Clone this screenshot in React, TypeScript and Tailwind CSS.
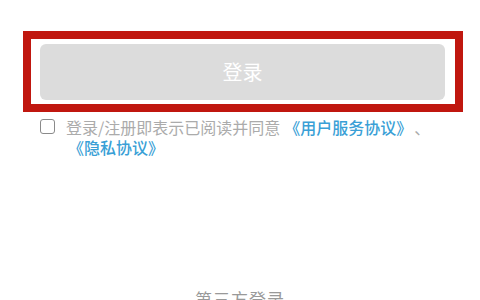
export default function App() {
  return (
    <div
      className="w-[480px] h-[300px] overflow-hidden bg-white pt-[31px]"
      style={{ fontFamily: '"Noto Sans CJK SC", "Noto Sans", sans-serif' }}
    >
      <div className="ml-[23px] w-[440px] border-8 border-[#c0170f] pl-[9px] pr-[10px] pt-[5px] pb-[4px]">
        <button className="flex h-[56px] w-full items-center justify-center rounded-md bg-[#dcdcdc] text-[20px] text-white">
          登录
        </button>
      </div>

      <div className="mt-[5px] flex items-start pl-[40px]">
        <span className="mt-[2px] h-[15px] w-[15px] shrink-0 rounded-[3px] border border-[#8a8a8a] bg-white" />
        <p className="ml-[11px] w-[375px] text-[16px] leading-[20px] text-[#ababab]">
          登录/注册即表示已阅读并同意<span className="ml-[4px] font-medium text-[#3a9fd6]">《用户服务协议》</span>
          <span className="ml-[10px]">、</span>
          <span className="ml-[2px] font-medium text-[#3a9fd6]">《隐私协议》</span>
        </p>
      </div>

      <div className="mt-[132px] flex items-center px-[43px]">
        <div className="mt-[10px] h-px flex-1 bg-[#e6e6e6]" />
        <span className="px-[23px] text-[17px] leading-[20px] text-[#999999] tracking-[1px]">第三方登录</span>
        <div className="mt-[10px] h-px flex-1 bg-[#e6e6e6]" />
      </div>
    </div>
  );
}
